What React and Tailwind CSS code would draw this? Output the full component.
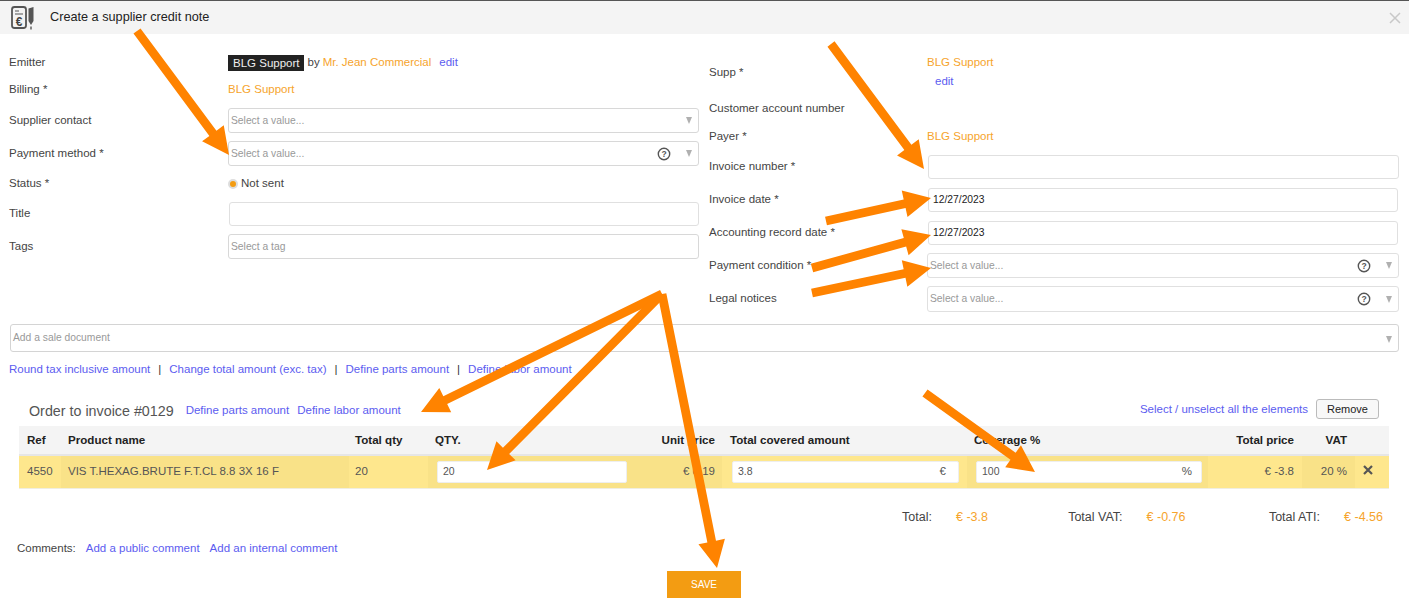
import React from "react";

const Help = () => (
  <svg width="14" height="14" viewBox="0 0 14 14" className="shrink-0">
    <circle cx="7" cy="7" r="5.7" fill="none" stroke="#555" strokeWidth="1.4" />
    <text x="7" y="10" textAnchor="middle" fontSize="8.5" fontWeight="700" fill="#555" fontFamily="Liberation Sans">?</text>
  </svg>
);

const Caret = () => <span className="block w-0 h-0 border-l-[3.5px] border-r-[3.5px] border-t-[7px] border-l-transparent border-r-transparent border-t-[#b0b0b0] shrink-0" />;

const Select = ({ text = "Select a value...", help, cls = "", caret = true }) => (
  <div className={`flex items-center justify-between rounded-[3px] border border-[#d8d8d8] bg-white pl-[2px] pr-[6px] ${cls}`}>
    <span className="text-[10.3px] text-[#999]">{text}</span>
    <span className="flex items-center gap-[15px]">
      {help && <Help />}
      {caret && <Caret />}
    </span>
  </div>
);

const Input = ({ value, cls = "" }) => (
  <div className={`flex items-center rounded-[3px] border border-[#e0e0e0] bg-white pl-[4px] text-[10.3px] text-[#222] ${cls}`}>{value}</div>
);

const Link = ({ children, cls = "" }) => <a className={`text-[#5c5cf0] ${cls}`}>{children}</a>;
const Org = ({ children, cls = "" }) => <span className={`text-[#f6a42c] ${cls}`}>{children}</span>;
const D = ({ children }) => <span className="mt-[2px]">{children}</span>;

const Arrow = ({ x1, y1, x2, y2 }) => {
  const dx = x2 - x1, dy = y2 - y1, l = Math.hypot(dx, dy);
  const ux = dx / l, uy = dy / l, nx = -uy, ny = ux;
  const head = 27, hw = 13.5, w = 4.4;
  const bx = x2 - ux * head, by = y2 - uy * head;
  const p = [
    [x1 + nx * w, y1 + ny * w], [bx + nx * w, by + ny * w], [bx + nx * hw, by + ny * hw], [x2, y2],
    [bx - nx * hw, by - ny * hw], [bx - nx * w, by - ny * w], [x1 - nx * w, y1 - ny * w],
  ].map((a) => a.join(",")).join(" ");
  return <polygon points={p} fill="#ff8300" />;
};

const arrows = [
  [137, 31, 229, 155], [831, 44, 924, 169], [826, 221, 931, 198], [812, 268, 931, 235], [812, 293, 931, 268],
  [662, 294, 421, 412], [662, 294, 487, 470], [662, 294, 717, 568], [925, 393, 1035, 472],
];

const Th = ({ children, cls = "" }) => <th className={`h-[29px] pt-[0px] font-bold text-[11.6px] text-[#222] ${cls}`}>{children}</th>;
const Td = ({ children, cls = "" }) => <td className={`text-[11.5px] text-[#555] p-0 border-b border-[#f0eee0] ${cls}`}>{children}</td>;

export default function App() {
  return (
    <div className="relative w-[1409px] h-[607px] overflow-hidden bg-white font-['Liberation_Sans',Arial,sans-serif]">
      <header className="flex items-center h-[34px] bg-[#f4f4f4] border-t border-[#555] pl-[10px] pr-[8px]">
        <svg width="25" height="26" viewBox="0 0 25 26" className="shrink-0">
          <rect x="2" y="2" width="14" height="21" rx="2.5" fill="none" stroke="#555" strokeWidth="1.8" />
          <path d="M5 6h4M5 9h8" stroke="#555" strokeWidth="1.2" />
          <text x="9" y="20.5" textAnchor="middle" fontSize="12" fontWeight="700" fill="#444" fontFamily="Liberation Sans">€</text>
          <path d="M18.5 3.5l5-1.5v14l-2.5 4-2.5-4z" fill="#555" />
          <path d="M21 21.5v3" stroke="#555" strokeWidth="1.4" />
        </svg>
        <h1 className="ml-[15px] text-[12.7px] text-[#222] font-normal">Create a supplier credit note</h1>
        <svg width="12" height="12" viewBox="0 0 12 12" className="ml-auto"><path d="M1 1l10 10M11 1L1 11" stroke="#c8c8c8" strokeWidth="1.5" /></svg>
      </header>

      <div className="flex pt-[16px] pl-[9px] h-[290px]">
        <div className="w-[700px] self-start shrink-0 grid grid-cols-[219px_471px] grid-rows-[26px_27px_35px_31px_28px_34px_31px] items-center text-[11.5px] text-[#444]">
          <span>Emitter</span>
          <div className="flex items-center">
            <span className="bg-[#222] text-[#eee] px-[5px] h-[16px] leading-[16px]">BLG Support</span>
            <span className="ml-[3px]">by</span><Org cls="ml-[3px]">Mr. Jean Commercial</Org><Link cls="ml-[8px]">edit</Link>
          </div>
          <span>Billing *</span><Org>BLG Support</Org>
          <span>Supplier contact</span><Select cls="h-[25px]" />
          <span>Payment method *</span><Select help cls="h-[25px]" />
          <D>Status *</D>
          <div className="flex items-center gap-[3px] mt-[2px]">
            <span className="w-[10px] h-[10px] rounded-full bg-[#f39c12] border-2 border-[#ddd]" />
            <span>Not sent</span>
          </div>
          <span>Title</span><Input cls="h-[24px] ml-[1px]" />
          <span>Tags</span><Select text="Select a tag" caret={false} cls="h-[25px]" />
        </div>
        <div className="w-[691px] self-start shrink-0 grid grid-cols-[218px_472px] grid-rows-[43px_30px_26px_36px_30px_36px_29px_38px] items-center text-[11.5px] text-[#444]">
          <D>Supp *</D>
          <div className="flex flex-col gap-[5px] leading-[14px]"><Org>BLG Support</Org><Link cls="ml-[8px]">edit</Link></div>
          <span className="col-span-2 mt-[2px]">Customer account number</span>
          <D>Payer *</D><D><Org>BLG Support</Org></D>
          <span>Invoice number *</span><Input cls="h-[24px] ml-[1px]" />
          <span>Invoice date *</span><Input value="12/27/2023" cls="h-[24px] ml-[1px] mr-[1px]" />
          <span>Accounting record date *</span><Input value="12/27/2023" cls="h-[24px] ml-[1px] mr-[1px]" />
          <span>Payment condition *</span><Select help cls="h-[25px] border-[#e0e0e0]" />
          <span>Legal notices</span><Select help cls="h-[26px] border-[#e0e0e0]" />
        </div>
      </div>

      <div className="ml-[10px] mr-[10px] h-[28px] rounded-[3px] border border-[#d4d4d4] flex justify-between pl-[2px] pr-[6px] pt-[5px]">
        <span className="text-[10.3px] text-[#999]">Add a sale document</span>
        <span className="mt-[6px]"><Caret /></span>
      </div>

      <div className="mt-[10px] ml-[9px] text-[11.5px] text-[#333] h-[14px] leading-[14px] flex gap-[8px]">
        <Link>Round tax inclusive amount</Link><span>|</span>
        <Link>Change total amount (exc. tax)</Link><span>|</span>
        <Link>Define parts amount</Link><span>|</span>
        <Link>Define labor amount</Link>
      </div>

      <div className="mt-[20px] ml-[29px] mr-[30px] h-[26px] flex items-center">
        <span className="text-[14.3px] text-[#555] mt-[5px]">Order to invoice #0129</span>
        <Link cls="ml-[12px] text-[11.5px] mt-[3px]">Define parts amount</Link>
        <Link cls="ml-[8px] text-[11.5px] mt-[3px]">Define labor amount</Link>
        <Link cls="ml-auto text-[11.5px] mt-[2px]">Select / unselect all the elements</Link>
        <button className="ml-[8px] w-[63px] h-[20px] rounded-[3px] border border-[#bbb] bg-[#f8f8f8] text-[11px] text-[#222]">Remove</button>
      </div>

      <table className="ml-[19px] mt-[4px] w-[1370px] table-fixed border-collapse">
        <colgroup>
          <col className="w-[42px]" /><col className="w-[288px]" /><col className="w-[79px]" /><col className="w-[208px]" /><col className="w-[86px]" />
          <col className="w-[245px]" /><col className="w-[241px]" /><col className="w-[94px]" /><col className="w-[53px]" /><col className="w-[34px]" />
        </colgroup>
        <thead>
          <tr className="bg-[#f4f4f4] border-b-2 border-[#e6e6e6]">
            <Th cls="text-left pl-[8px]">Ref</Th>
            <Th cls="text-left pl-[7px]">Product name</Th>
            <Th cls="text-left pl-[6px]">Total qty</Th>
            <Th cls="text-left pl-[7px]">QTY.</Th>
            <Th cls="text-right pr-[7px]">Unit price</Th>
            <Th cls="text-left pl-[8px]">Total covered amount</Th>
            <Th cls="text-left pl-[7px]">Coverage %</Th>
            <Th cls="text-right pr-[8px]">Total price</Th>
            <Th cls="text-right pr-[8px]">VAT</Th>
            <Th />
          </tr>
        </thead>
        <tbody>
          <tr className="h-[33px]">
            <Td cls="bg-[#fee78d] pl-[8px]">4550</Td>
            <Td cls="bg-[#f9e288] pl-[7px]">VIS T.HEXAG.BRUTE F.T.CL 8.8 3X 16 F</Td>
            <Td cls="bg-[#fee78d] pl-[6px]">20</Td>
            <Td cls="bg-[#f9e288] pl-[9px]">
              <div className="w-[190px] h-[22px] bg-white rounded-[2px] border border-[#eee] flex items-center pl-[5px] text-[10.5px]">20</div>
            </Td>
            <Td cls="bg-[#f9e288] text-right pr-[7px]">€ 0.19</Td>
            <Td cls="bg-[#fee78d] pl-[10px]">
              <div className="w-[227px] h-[22px] bg-white rounded-[2px] border border-[#eee] flex items-center justify-between pl-[5px] pr-[12px] text-[10.5px]"><span>3.8</span><span className="text-[11.5px]">€</span></div>
            </Td>
            <Td cls="bg-[#f9e288] pl-[9px]">
              <div className="w-[226px] h-[22px] bg-white rounded-[2px] border border-[#eee] flex items-center justify-between pl-[5px] pr-[9px] text-[10.5px]"><span>100</span><span className="text-[11.5px]">%</span></div>
            </Td>
            <Td cls="bg-[#fee78d] text-right pr-[8px]">€ -3.8</Td>
            <Td cls="bg-[#f9e288] text-right pr-[8px]">20 %</Td>
            <Td cls="bg-[#fee78d] pl-[8px]">
              <svg width="10" height="10" viewBox="0 0 10 10" className="mb-[3px]"><path d="M1 1l8 8M9 1L1 9" stroke="#555" strokeWidth="2.2" /></svg>
            </Td>
          </tr>
        </tbody>
      </table>

      <div className="mt-[19px] h-[16px] grid grid-cols-[932px_auto_1fr_auto_1fr_auto_26px] text-[12.5px] text-[#444] items-center">
        <span className="text-right">Total:</span>
        <Org cls="ml-[24px]">€ -3.8</Org>
        <span className="text-right">Total VAT:</span>
        <Org cls="ml-[24px]">€ -0.76</Org>
        <span className="text-right">Total ATI:</span>
        <Org cls="ml-[24px]">€ -4.56</Org>
      </div>

      <div className="mt-[17px] ml-[17px] flex gap-[10px] text-[11.5px] h-[16px] items-center">
        <span className="text-[#444]">Comments:</span>
        <Link>Add a public comment</Link>
        <Link>Add an internal comment</Link>
      </div>

      <button className="block mt-[14px] ml-[667px] w-[74px] h-[27px] bg-[#f39c12] text-white text-[10px]">SAVE</button>

      <svg width="1409" height="607" className="absolute inset-0 pointer-events-none">
        {arrows.map((a, i) => <Arrow key={i} x1={a[0]} y1={a[1]} x2={a[2]} y2={a[3]} />)}
      </svg>
    </div>
  );
}
